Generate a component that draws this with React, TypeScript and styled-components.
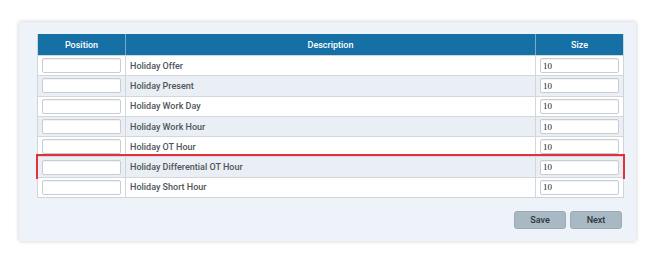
import styled, { createGlobalStyle } from 'styled-components';

const GlobalStyle = createGlobalStyle`
  html, body {
    margin: 0;
    padding: 0;
    background: #ffffff;
  }
  body {
    font-family: Roboto, "Liberation Sans", sans-serif;
  }
`;

const Page = styled.div`
  width: 652px;
  height: 264px;
  padding: 22px 0 0 19px;
  box-sizing: border-box;
`;

const Panel = styled.section`
  width: 617px;
  height: 219px;
  box-sizing: border-box;
  padding: 12px 14px 13px 18px;
  background: #eef3f9;
  box-shadow: 0 0 4px rgba(0, 0, 0, 0.22);
  display: flex;
  flex-direction: column;
`;

const Grid = styled.div`
  display: flex;
  flex-direction: column;
  width: 585px;
  border: 1px solid #cfd4d8;
  border-top: none;
`;

const Row = styled.div<{ $alt?: boolean; $flagged?: boolean }>`
  display: grid;
  grid-template-columns: 87px 410px 1fr;
  height: 19.3px;
  border-top: 1px solid #d2d7db;
  background: ${(p) => (p.$alt ? '#e9eff4' : '#ffffff')};
  outline: ${(p) => (p.$flagged ? '2px solid #e2313d' : 'none')};
  outline-offset: 0px;
`;

const HeadRow = styled.div`
  display: grid;
  grid-template-columns: 87px 410px 1fr;
  height: 21px;
  background: #1570a6;
`;

const HeadCell = styled.div<{ $divider?: boolean }>`
  display: flex;
  align-items: center;
  justify-content: center;
  color: #ffffff;
  font-size: 9px;
  font-weight: 500;
  border-left: ${(p) => (p.$divider ? '1px solid #7aa9c7' : 'none')};
`;

const Cell = styled.div<{ $divider?: boolean }>`
  display: flex;
  align-items: center;
  padding: 0 4px;
  color: #4f5559;
  font-size: 9px;
  font-weight: 500;
  border-left: ${(p) => (p.$divider ? '1px solid #d2d7db' : 'none')};
`;

const Field = styled.input`
  width: 79px;
  height: 15px;
  box-sizing: border-box;
  border: 1px solid #c8cdd1;
  border-radius: 2px;
  background: #ffffff;
  padding: 0 2px;
  font-family: "Liberation Serif", serif;
  font-size: 9px;
  color: #222;
  box-shadow: inset 0 1px 1px rgba(0, 0, 0, 0.06);
  outline: none;
`;

const Actions = styled.div`
  display: flex;
  justify-content: flex-end;
  gap: 4px;
  width: 585px;
  margin-top: 13px;
`;

const Button = styled.button`
  width: 52px;
  height: 18px;
  border: 1px solid #9aabb6;
  border-radius: 3px;
  background: #a9b9c3;
  color: #2a353c;
  font-family: Roboto, "Liberation Sans", sans-serif;
  font-size: 9px;
  font-weight: 500;
  padding: 0;
  cursor: pointer;
`;

const rows = [
  'Holiday Offer',
  'Holiday Present',
  'Holiday Work Day',
  'Holiday Work Hour',
  'Holiday OT Hour',
  'Holiday Differential OT Hour',
  'Holiday Short Hour'
];

const App = () => {
  return (
    <Page>
      <GlobalStyle />
      <Panel>
        <Grid>
          <HeadRow>
            <HeadCell>Position</HeadCell>
            <HeadCell $divider>Description</HeadCell>
            <HeadCell $divider>Size</HeadCell>
          </HeadRow>
          {rows.map((label, i) => (
            <Row key={label} $alt={i % 2 === 1} $flagged={label === 'Holiday Differential OT Hour'}>
              <Cell>
                <Field defaultValue='' />
              </Cell>
              <Cell $divider>{label}</Cell>
              <Cell $divider>
                <Field defaultValue='10' />
              </Cell>
            </Row>
          ))}
        </Grid>
        <Actions>
          <Button>Save</Button>
          <Button>Next</Button>
        </Actions>
      </Panel>
    </Page>
  );
};

export default App;
